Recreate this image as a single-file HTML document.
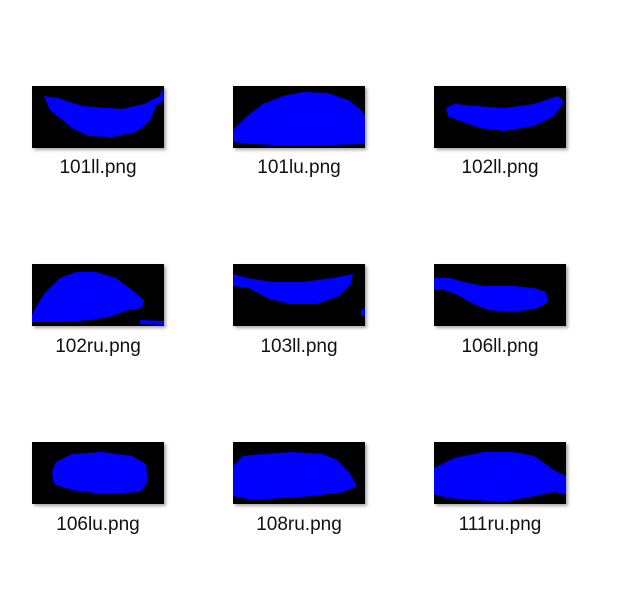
<!DOCTYPE html>
<html><head><style>
body{margin:0;width:624px;height:590px;background:#fff;position:relative;overflow:hidden;font-family:"Liberation Sans",sans-serif}
.t{position:absolute;width:132px;height:62px;background:#000;box-shadow:2px 2px 3px rgba(0,0,0,.35)}
.t svg{display:block}
.l{position:absolute;width:200px;text-align:center;font-size:19px;color:#111}
</style></head><body>
<div class="t" style="left:32px;top:86px"><svg width="132" height="62"><path fill="#00f" d="M12 10 L26 12 L50 20 L90 23 L112 18 L128 10 L130 2 L132 14 L124 20 L118 35 L104 46 L80 51 L56 50 L40 42 L28 32 L18 24 Z"/></svg></div>
<div class="l" style="left:-2px;top:157px">101ll.png</div>
<div class="t" style="left:233px;top:86px"><svg width="132" height="62"><path fill="#00f" d="M0 44 L14 30 L30 18 L50 10 L70 6 L95 7 L115 14 L126 22 L132 30 L132 58 L60 60 L20 58 L0 56 Z"/></svg></div>
<div class="l" style="left:199px;top:157px">101lu.png</div>
<div class="t" style="left:434px;top:86px"><svg width="132" height="62"><path fill="#00f" d="M12 22 L20 18 L42 20 L70 22 L100 18 L124 10 L130 16 L120 30 L100 40 L70 45 L46 42 L24 34 L14 30 Z"/></svg></div>
<div class="l" style="left:400px;top:157px">102ll.png</div>

<div class="t" style="left:32px;top:264px"><svg width="132" height="62"><path fill="#00f" d="M0 50 L12 30 L28 14 L44 8 L64 8 L84 14 L100 26 L112 36 L110 44 L96 46 L80 52 L60 56 L30 58 L0 58 Z M108 56 L132 57 L132 61 L108 60 Z"/></svg></div>
<div class="l" style="left:-2px;top:336px">102ru.png</div>
<div class="t" style="left:233px;top:264px"><svg width="132" height="62"><path fill="#00f" d="M0 10 L14 14 L40 18 L70 18 L100 14 L120 10 L118 20 L106 32 L84 40 L56 40 L34 34 L16 24 L0 22 Z M128 46 L132 44 L132 52 L128 52 Z"/></svg></div>
<div class="l" style="left:199px;top:336px">103ll.png</div>
<div class="t" style="left:434px;top:264px"><svg width="132" height="62"><path fill="#00f" d="M0 14 L16 14 L30 18 L50 22 L80 22 L100 24 L112 28 L114 38 L104 44 L80 48 L54 46 L36 38 L22 30 L10 26 L0 26 Z"/></svg></div>
<div class="l" style="left:400px;top:336px">106ll.png</div>

<div class="t" style="left:32px;top:442px"><svg width="132" height="62"><path fill="#00f" d="M24 20 L40 12 L70 10 L100 14 L114 22 L116 40 L108 50 L70 52 L40 48 L22 42 L20 30 Z"/></svg></div>
<div class="l" style="left:-2px;top:514px">106lu.png</div>
<div class="t" style="left:233px;top:442px"><svg width="132" height="62"><path fill="#00f" d="M0 24 L10 14 L30 12 L60 10 L90 12 L104 18 L116 30 L124 44 L110 50 L80 54 L50 56 L20 58 L0 54 Z"/></svg></div>
<div class="l" style="left:199px;top:514px">108ru.png</div>
<div class="t" style="left:434px;top:442px"><svg width="132" height="62"><path fill="#00f" d="M0 26 L20 16 L50 10 L80 10 L100 14 L112 22 L120 28 L132 34 L132 52 L120 50 L100 54 L70 60 L40 58 L14 56 L0 52 Z"/></svg></div>
<div class="l" style="left:400px;top:514px">111ru.png</div>
</body></html>
